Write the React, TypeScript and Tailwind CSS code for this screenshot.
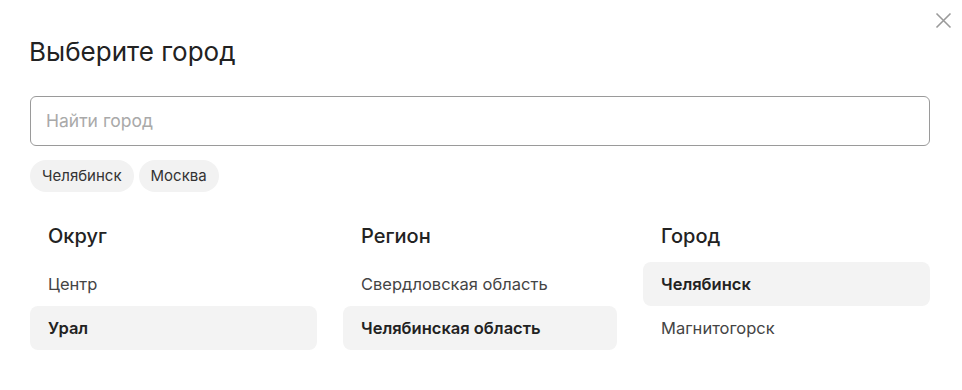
import React from "react";

const cols = [
  { title: "Округ", items: [{ t: "Центр" }, { t: "Урал", sel: true }] },
  { title: "Регион", items: [{ t: "Свердловская область" }, { t: "Челябинская область", sel: true }] },
  { title: "Город", items: [{ t: "Челябинск", sel: true }, { t: "Магнитогорск" }] },
];

export default function App() {
  return (
    <div
      className="relative w-[962px] h-[390px] bg-white px-[30px] pt-[36px] text-[#222]"
      style={{ fontFamily: "Inter, 'Noto Sans', sans-serif" }}
    >
      <button className="absolute right-[10px] top-[11px] w-[18px] h-[18px] flex items-center justify-center text-[#9a9a9a]">
        <svg width="17" height="17" viewBox="0 0 17 17" fill="none" stroke="currentColor" strokeWidth="1.6">
          <path d="M1.5 1.5 L15.5 15.5 M15.5 1.5 L1.5 15.5" />
        </svg>
      </button>
      <h1 className="text-[26px] leading-[32px] font-normal text-[#222] -ml-px">Выберите город</h1>
      <div className="mt-[28px] w-[900px] h-[50px] rounded-[6px] border border-[#9a9a9a] flex items-center px-[15px]">
        <input
          className="w-full outline-none text-[17.5px] text-[#222] placeholder:text-[#a9a9a9] bg-transparent"
          placeholder="Найти город"
        />
      </div>
      <div className="mt-[14px] flex gap-[5px]">
        {["Челябинск", "Москва"].map((c) => (
          <span key={c} className="h-[32px] px-[12px] rounded-full bg-[#f2f2f2] text-[15px] text-[#333] flex items-center">
            {c}
          </span>
        ))}
      </div>
      <div className="mt-[30px] grid grid-cols-[287px_274px_287px] gap-x-[26px]">
        {cols.map((col) => (
          <div key={col.title} className="flex flex-col">
            <div className="pl-[18px] text-[20px] leading-[28px] font-medium text-[#222] mb-[12px]">{col.title}</div>
            {col.items.map((it) => (
              <div
                key={it.t}
                className={
                  it.sel
                    ? "h-[44px] rounded-[8px] bg-[#f3f3f3] pl-[18px] flex items-center text-[16.5px] font-semibold text-[#222]"
                    : "h-[44px] rounded-[8px] pl-[18px] flex items-center text-[16.5px] text-[#444]"
                }
              >
                {it.t}
              </div>
            ))}
          </div>
        ))}
      </div>
    </div>
  );
}
